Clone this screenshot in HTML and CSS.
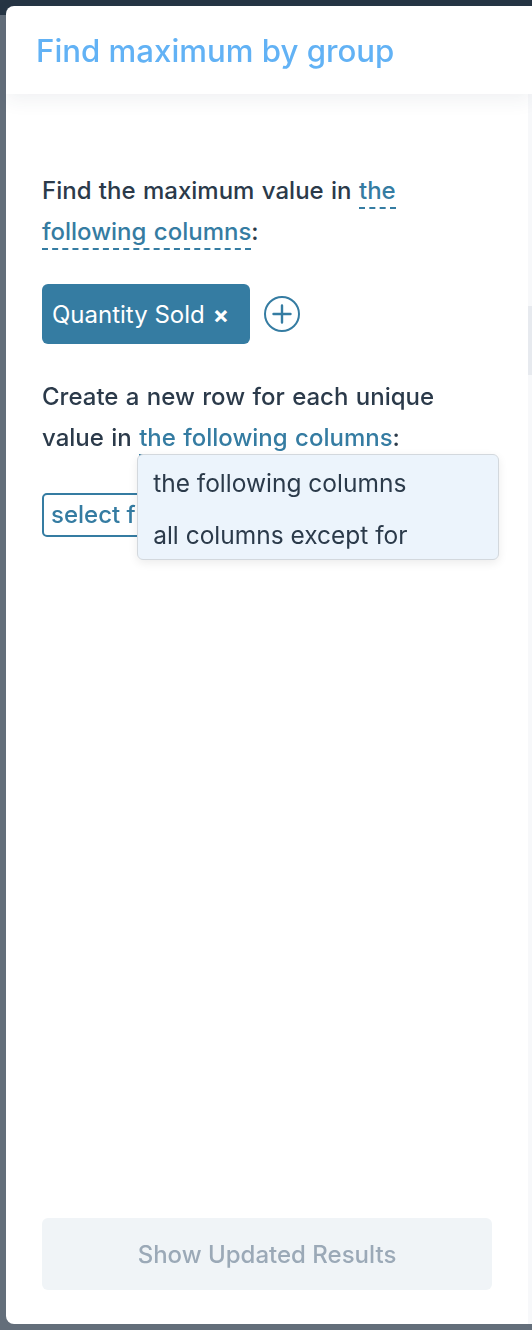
FILE: index.html
```html
<!DOCTYPE html>
<html>
<head>
  <title>Find maximum by group</title>
  <link rel="stylesheet" href="styles.css">
</head>
<body>

  <div class="app-topbar"></div>

  <div class="taskpane">
    <div class="taskpane-header">
      <h1 class="taskpane-title">Find maximum by group</h1>
    </div>

    <div class="taskpane-main">
      <div class="taskpane-body">
        <p class="step-text">
          Find the maximum value in <span class="dashed-link">the following columns</span>:
        </p>

        <div class="chip-row">
          <span class="column-chip">Quantity Sold <span class="chip-x">&#215;</span></span>
          <svg class="add-icon" width="38" height="38" viewBox="0 0 38 38">
            <circle cx="19" cy="19" r="17" fill="none" stroke="#357ca2" stroke-width="2"/>
            <path d="M19 10.5v17M10.5 19h17" stroke="#357ca2" stroke-width="2.4" stroke-linecap="round"/>
          </svg>
        </div>

        <p class="step-text">
          Create a new row for each unique value in
          <span class="dashed-link dropdown-anchor">the following columns<span class="dropdown-menu">
              <span class="dropdown-item">the following columns</span>
              <span class="dropdown-item">all columns except for</span>
            </span></span>:
        </p>

        <div class="select-box">select from columns</div>

        <div class="spacer"></div>

        <button class="update-button" type="button">Show Updated Results</button>
      </div>
      <div class="edge-strip">
        <div class="edge-mark"></div>
      </div>
    </div>
  </div>

</body>
</html>
```

FILE: styles.css
```css
html, body {
  margin: 0;
  height: 100%;
}
body {
  background-color: #636e7a;
  font-family: Inter, "Noto Sans", sans-serif;
  color: #2b3a4a;
  overflow: hidden;
}
.app-topbar {
  height: 15px;
  background-color: #263544;
}

/* drawer lying over the sheet */
.taskpane {
  position: fixed;
  top: 6px;
  left: 6px;
  right: 0;
  bottom: 6px;
  background-color: #fff;
  border-radius: 8px 0 0 8px;
  display: flex;
  flex-direction: column;
}
.taskpane-header {
  height: 88px;
  padding-left: 30px;
  display: flex;
  align-items: center;
  box-shadow: 0 6px 18px rgba(40, 60, 90, 0.07);
  position: relative;
  z-index: 1;
}
.taskpane-title {
  margin: 0;
  font-size: 31.2px;
  font-weight: 500;
  color: #62b2f5;
  padding-top: 2px;
}
.taskpane-main {
  flex: 1;
  display: flex;
  min-height: 0;
}
.taskpane-body {
  flex: 1;
  display: flex;
  flex-direction: column;
  padding: 76px 36px 34px 36px;
}
.edge-strip {
  width: 4px;
  background-color: #f7f8fa;
  padding-top: 212px;
}
.edge-mark {
  height: 69px;
  background-color: #e7eaef;
}

.step-text {
  margin: 0;
  font-size: 24px;
  font-weight: 500;
  line-height: 41px;
  word-spacing: 1px;
}
.dashed-link {
  color: #357ca2;
  padding-bottom: 2px;
  border-bottom: 2px dashed #357ca2;
}
.dropdown-anchor {
  position: relative;
}
.dropdown-menu {
  position: absolute;
  left: -2px;
  top: 31px;
  width: 360px;
  background-color: #ecf4fc;
  border: 1px solid #d3d8dd;
  border-radius: 6px;
  box-shadow: 0 3px 10px rgba(0, 0, 0, 0.08);
  display: flex;
  flex-direction: column;
  z-index: 2;
  white-space: nowrap;
  word-spacing: normal;
}
.dropdown-item {
  display: block;
  height: 52px;
  line-height: 57px;
  padding-left: 15px;
  font-size: 24.5px;
  font-weight: 400;
  color: #2b3a4a;
}

.chip-row {
  display: flex;
  align-items: center;
  gap: 13px;
  margin: 32px 0 32px 0;
}
.column-chip {
  height: 60px;
  display: flex;
  align-items: center;
  padding: 0 21px 0 10px;
  background-color: #357ca2;
  color: #fff;
  border-radius: 6px;
  font-size: 24px;
}
.chip-x {
  margin-left: 8px;
  font-size: 24px;
  font-weight: 700;
}

.select-box {
  margin-top: 35px;
  width: 320px;
  height: 40px;
  line-height: 40px;
  border: 2px solid #357ca2;
  border-radius: 5px;
  padding-left: 7px;
  font-size: 24px;
  font-weight: 500;
  color: #357ca2;
}

.spacer {
  flex: 1;
}
.update-button {
  height: 72px;
  border: none;
  border-radius: 6px;
  background-color: #f0f4f7;
  color: #9ba9b7;
  font-family: Inter, "Noto Sans", sans-serif;
  font-size: 24px;
  font-weight: 500;
}
```
